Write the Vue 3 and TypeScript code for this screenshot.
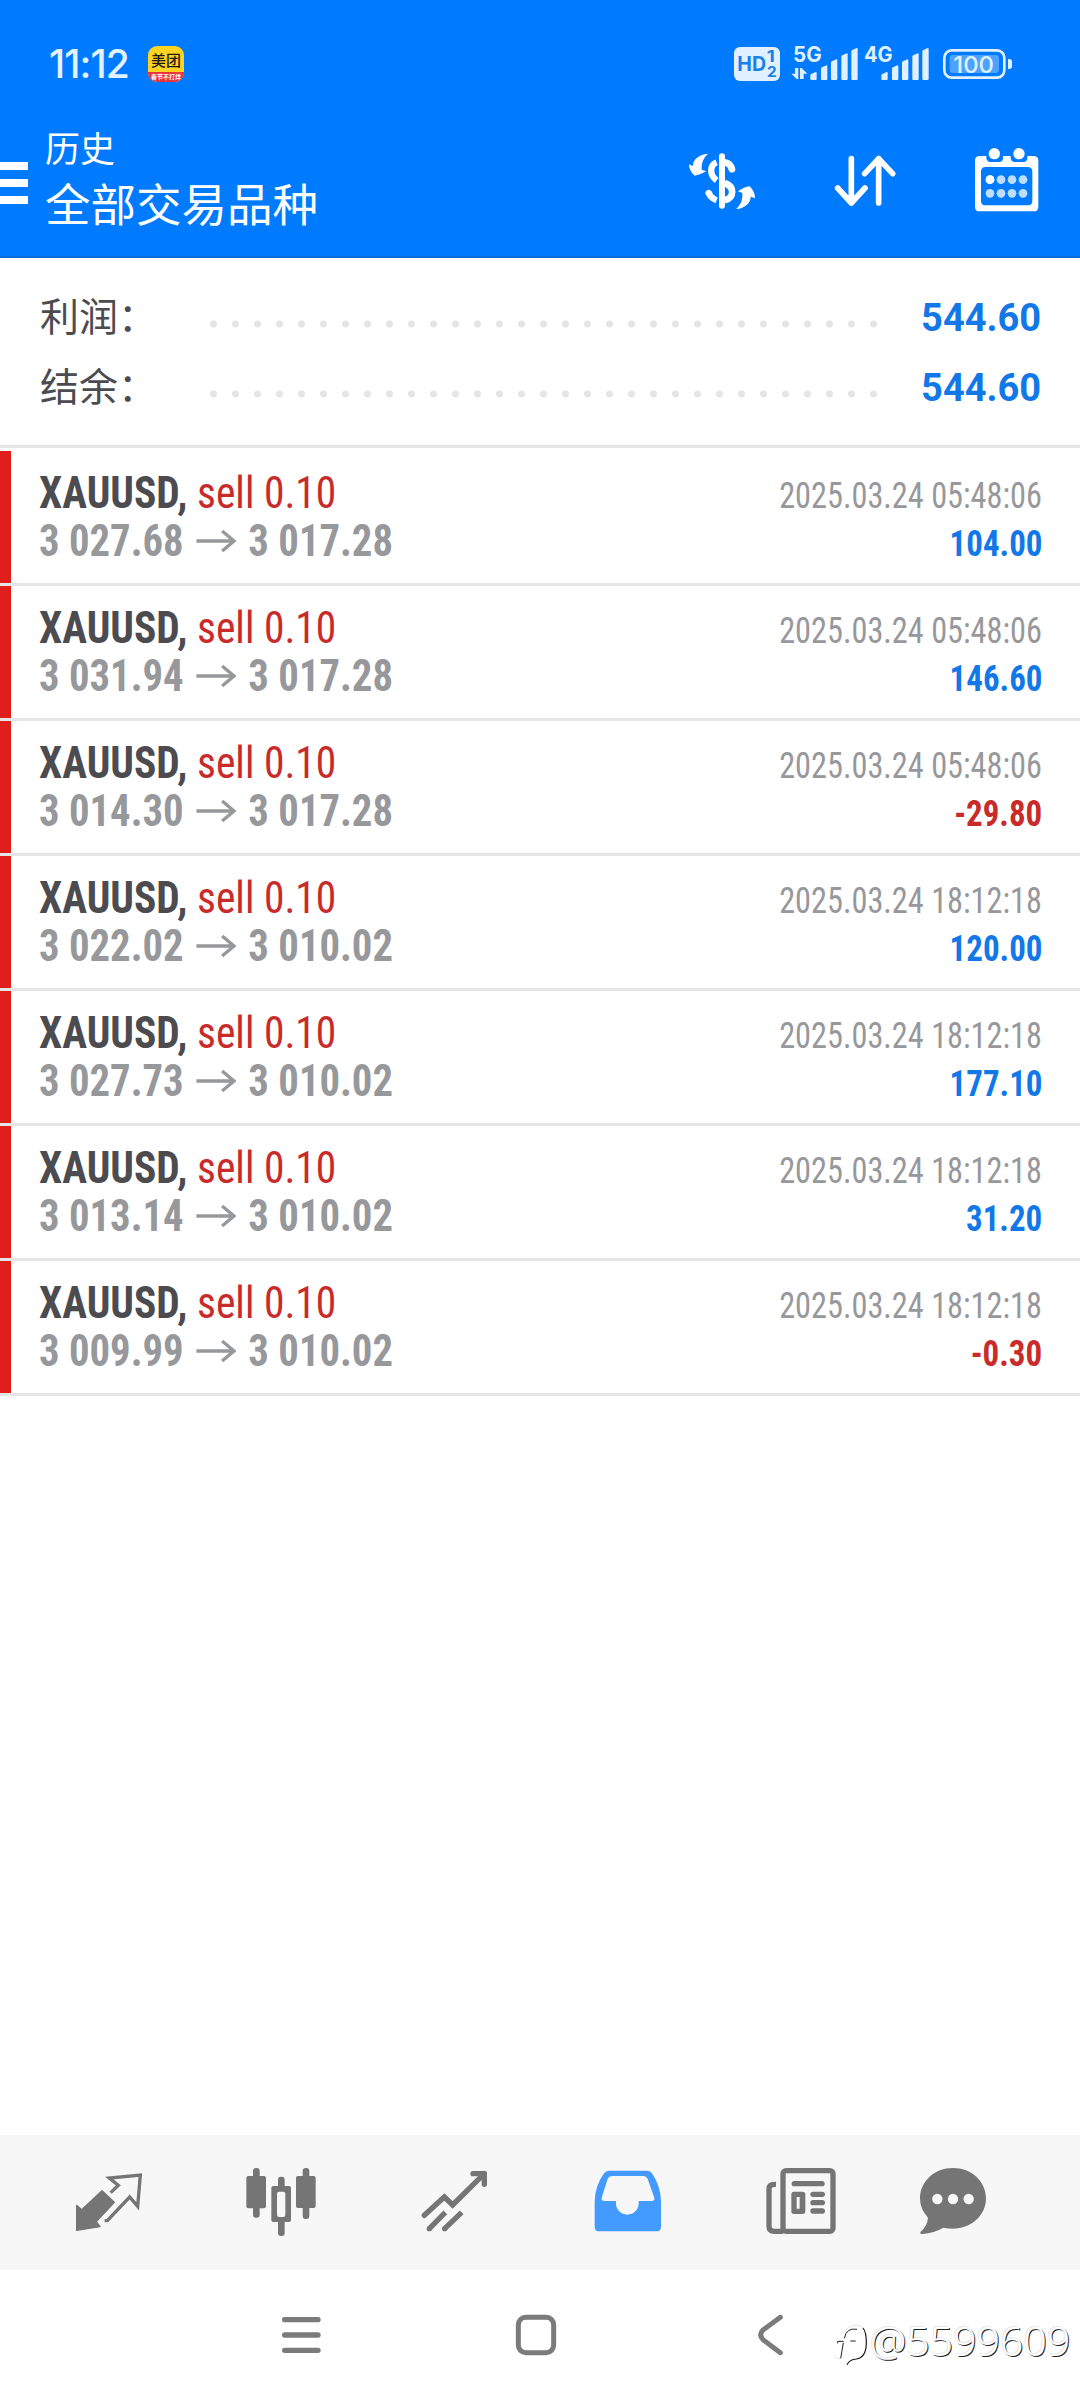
<script setup lang="ts">
interface Deal {
  open: string
  close: string
  time: string
  profit: string
}

const deals: Deal[] = [
  { open: '3 027.68', close: '3 017.28', time: '2025.03.24 05:48:06', profit: '104.00' },
  { open: '3 031.94', close: '3 017.28', time: '2025.03.24 05:48:06', profit: '146.60' },
  { open: '3 014.30', close: '3 017.28', time: '2025.03.24 05:48:06', profit: '-29.80' },
  { open: '3 022.02', close: '3 010.02', time: '2025.03.24 18:12:18', profit: '120.00' },
  { open: '3 027.73', close: '3 010.02', time: '2025.03.24 18:12:18', profit: '177.10' },
  { open: '3 013.14', close: '3 010.02', time: '2025.03.24 18:12:18', profit: '31.20' },
  { open: '3 009.99', close: '3 010.02', time: '2025.03.24 18:12:18', profit: '-0.30' },
]

const summary = [
  { label: '利润：', value: '544.60' },
  { label: '结余：', value: '544.60' },
]

// Signal bars: x offset and top edge of each
const bars = [
  [391, 160],
  [423, 140],
  [453, 122],
  [484, 104],
  [514, 88],
]
</script>

<template>
  <div class="screen">
    <header class="top">
      <div class="status">
        <span class="clock">11:12</span>
        <span class="app-badge">
          <span class="app-name">美团</span>
          <span class="app-promo">春节不打烊</span>
        </span>
        <svg class="status-icons" width="280" height="58" viewBox="159 42 840 174">
          <rect x="162" y="81" width="138" height="102" rx="18" fill="#e0f0ff" />
          <g class="sys" fill="#1a7fe8">
            <text x="172" y="153" font-size="60" font-weight="700" textLength="86" lengthAdjust="spacingAndGlyphs">HD</text>
            <text x="260" y="127" font-size="46" font-weight="700" textLength="24" lengthAdjust="spacingAndGlyphs">1</text>
            <text x="261" y="170" font-size="44" font-weight="700" textLength="29" lengthAdjust="spacingAndGlyphs">2</text>
          </g>
          <g class="sys" fill="#e0f0ff">
            <text x="339" y="126" font-size="63" font-weight="700" textLength="86" lengthAdjust="spacingAndGlyphs">5G</text>
            <text x="552" y="126" font-size="63" font-weight="700" textLength="86" lengthAdjust="spacingAndGlyphs">4G</text>
            <path d="M345 144h10v33h-5l-16-16h11zM360 177v-33h5l17 17h-11v16z" />
            <g v-for="dx in [0, 213]" :key="dx">
              <path
                v-for="b in bars"
                :key="b[0]"
                :d="`M${b[0] + dx} 180V${b[1] + 6}q0-3 3-4l13-6q3-1 3 3V177q0 3-3 3h-13q-3 0-3-3z`"
              />
            </g>
          </g>
          <rect x="793" y="91" width="180" height="82" rx="22" fill="none" stroke="#e0f0ff" stroke-width="8" />
          <rect x="809" y="105" width="148" height="54" rx="9" fill="#4da2ff" />
          <path d="M984 117h4q8 0 8 8v14q0 8-8 8h-4z" fill="#e0f0ff" />
          <text class="sys" x="820" y="158" font-size="69" font-weight="500" fill="#e0f0ff" textLength="122" lengthAdjust="spacingAndGlyphs">100</text>
        </svg>
      </div>

      <div class="toolbar">
        <span class="menu"><i></i><i></i><i></i></span>
        <div class="titles">
          <div class="sub">历史</div>
          <div class="title">全部交易品种</div>
        </div>
        <div class="actions">
          <svg width="70" height="64" viewBox="21 387 210 192">
            <g fill="none" stroke="#fff" stroke-linecap="butt">
              <path d="M126 409V557" stroke-width="18" stroke-linecap="round" />
              <path d="M110 427C88 436 88 466 110 481" stroke-width="19" />
              <path d="M86 518C89 528 97 536 110 541" stroke-width="19" />
              <path d="M86 519L87 520" stroke-width="19" stroke-linecap="round" />
              <path d="M134 427Q150 429 156 446M134 489C164 500 164 532 134 541" stroke-width="20" />
              <path d="M155 446L156 448" stroke-width="20" stroke-linecap="round" />
            </g>
            <g fill="#fff">
              <path d="M84 401Q62 402 46 418 39 426 38 438L27 433Q27 453 44 467 60 465 79 454L65 449Q62 421 84 401z" />
              <path d="M169 567Q189 566 204 551 211 542 213 530L225 535Q225 515 209 499 193 501 174 514L187 519Q190 547 169 567z" />
            </g>
          </svg>
          <svg width="62" height="52" viewBox="462 405 186 156">
            <path
              d="M514 416V549M473 504L514 549L555 504M596 549V416M554 461L596 416L638 461"
              fill="none" stroke="#fff" stroke-width="17" stroke-linecap="round" stroke-linejoin="round"
            />
          </svg>
          <svg width="66" height="66" viewBox="882 381 198 198">
            <path
              fill="#fff" fill-rule="evenodd"
              d="M899 408h20v6q2 12 12 12h26q12 0 12-12v-6h23v6q2 12 12 12h26q12 0 12-12v-6h19q14 0 14 14V560q0 14-14 14H899q-14 0-14-14V422q0-14 14-14zM917 441q-14 0-14 14v87q0 14 14 14h126q14 0 14-14v-87q0-14-14-14z"
            />
            <circle cx="943" cy="401" r="17" fill="#fff" />
            <circle cx="1017" cy="401" r="17" fill="#fff" />
            <g fill="#bfdeff">
              <template v-for="cy in [479, 520]" :key="cy">
                <circle v-for="cx in [930, 963, 996, 1029]" :key="cx" :cx="cx" :cy="cy" r="13" />
              </template>
            </g>
            <circle cx="930" cy="479" r="13" fill="#fff" />
          </svg>
        </div>
      </div>
    </header>

    <section class="summary">
      <div v-for="s in summary" :key="s.label" class="sum-row">
        <span class="sum-label">{{ s.label }}</span>
        <span class="dots"></span>
        <span class="sum-value">{{ s.value }}</span>
      </div>
    </section>

    <ul class="deals">
      <li v-for="(d, i) in deals" :key="i" class="deal">
        <div class="line">
          <span class="symbol">XAUUSD, <em>sell 0.10</em></span>
          <span class="time">{{ d.time }}</span>
        </div>
        <div class="line">
          <span class="prices">
            <span>{{ d.open }}</span>
            <svg width="43" height="24" viewBox="0 0 40 24" preserveAspectRatio="none">
              <path d="M0 12H38M26 2L38 12L26 22" fill="none" stroke="#97989c" stroke-width="3.4" />
            </svg>
            <span>{{ d.close }}</span>
          </span>
          <span class="profit" :class="{ loss: d.profit.startsWith('-') }">{{ d.profit }}</span>
        </div>
      </li>
    </ul>

    <nav class="tabs">
      <!-- quotes -->
      <svg width="70" height="62" viewBox="222 153 210 186">
        <path
          d="M306 212L343 247L289 305L300 320L230 331V256L245 269Z"
          fill="#757575" stroke="#757575" stroke-width="4" stroke-linejoin="round"
        />
        <path
          d="M332 218L355 196L328 174L421 165L413 259L389 231L322 302H314"
          fill="none" stroke="#757575" stroke-width="10"
        />
      </svg>
      <!-- charts -->
      <svg width="70" height="70" viewBox="738 141 210 210">
        <g fill="#757575">
          <rect x="759" y="144" width="20" height="149" rx="9" />
          <rect x="739" y="168" width="59" height="97" rx="6" />
          <rect x="908" y="144" width="20" height="153" rx="9" />
          <rect x="888" y="168" width="59" height="96" rx="6" />
          <rect x="834" y="170" width="20" height="178" rx="9" />
          <rect x="814" y="198" width="59" height="108" rx="6" />
        </g>
        <rect x="831" y="215" width="25" height="76" rx="6" fill="#f7f7f7" />
      </svg>
      <!-- trade -->
      <svg width="68" height="64" viewBox="182 147 204 192">
        <g fill="none" stroke="#757575" stroke-width="16">
          <path d="M192 286L252 231L277 255L372 161" stroke-linecap="round" />
          <path d="M338 161H372V193" stroke-linecap="round" stroke-linejoin="round" />
          <path d="M255 277L207 326M304 277L253 326" />
        </g>
        <circle cx="207" cy="326" r="8" fill="#757575" />
        <circle cx="253" cy="326" r="8" fill="#757575" />
      </svg>
      <!-- history -->
      <svg width="68" height="62" viewBox="701 150 204 186">
        <path
          fill="#439bff" fill-rule="evenodd"
          d="M746 152H860Q870 152 875 160Q902 200 902 246V320Q902 334 888 334H717Q703 334 703 320V246Q703 200 731 160Q736 152 746 152zM756 168Q746 168 742 177L725 230Q721 243 733 243H767V250A34 34 0 0 0 835 250V243H873Q886 243 881 230L862 177Q858 168 848 168z"
        />
      </svg>
      <!-- news -->
      <svg width="70" height="68" viewBox="138 141 210 204">
        <g fill="none" stroke="#757575" stroke-width="16">
          <rect x="189" y="152" width="150" height="182" rx="9" />
          <path d="M168 193Q147 192 147 207V318Q147 334 163 334H190" />
        </g>
        <g fill="#757575">
          <rect x="215" y="183" width="99" height="16" rx="8" />
          <path fill-rule="evenodd" d="M222 215h26q8 0 8 8v51q0 8-8 8h-26q-8 0-8-8v-51q0-8 8-8zM230 231v35h9v-35z" />
          <rect x="271" y="215" width="44" height="16" rx="8" />
          <rect x="271" y="240" width="44" height="16" rx="8" />
          <rect x="271" y="265" width="44" height="16" rx="8" />
        </g>
      </svg>
      <!-- messages -->
      <svg width="68" height="68" viewBox="597 141 204 204">
        <path
          fill="#757575"
          d="M699 144C754 144 798 184 798 235S754 326 699 326Q684 326 670 323Q643 339 607 342Q598 342 602 335Q622 318 624 293Q600 268 600 235C600 184 644 144 699 144z"
        />
        <g fill="#f7f7f7">
          <circle cx="652" cy="237" r="15.500" /><circle cx="699" cy="237" r="15.500" /><circle cx="746" cy="237" r="15.500" />
        </g>
      </svg>
    </nav>

    <footer class="sysnav">
      <svg width="40" height="38" viewBox="843 588 120 114">
        <path d="M854 599H954M854 645H954M854 691H954" stroke="#7b7b7b" stroke-width="16" stroke-linecap="round" />
      </svg>
      <svg width="42" height="42" viewBox="465 581 126 126">
        <rect x="475" y="591" width="106" height="106" rx="22" fill="none" stroke="#7b7b7b" stroke-width="15" />
      </svg>
      <svg width="28" height="42" viewBox="108 582 84 126">
        <path
          d="M181 592L129 630Q115 644 129 659L181 698"
          fill="none" stroke="#7b7b7b" stroke-width="15" stroke-linecap="round" stroke-linejoin="round"
        />
      </svg>
      <div class="mark">
        <svg width="36" height="42" viewBox="340 612 108 126">
          <path d="M430 624Q440 636 440 668Q440 712 410 717Q390 718 382 734" fill="none" stroke="#111" stroke-width="3.500" />
          <path d="M412 628Q380 622 374 655M371 668L363 716M354 670V664H372M392 663H408" fill="none" stroke="#222" stroke-width="3" />
          <path d="M372 640Q384 616 412 615Q424 616 430 624M363 716Q352 718 343 708" fill="none" stroke="#ddd" stroke-width="2.500" />
        </svg>
        <span>@5599609</span>
      </div>
    </footer>
  </div>
</template>

<style>
body {
  margin: 0;
  background: #fff;
}
</style>

<style scoped>
.screen {
  width: 1080px;
  height: 2400px;
  display: flex;
  flex-direction: column;
  background: #fff;
  overflow: hidden;
  font-family: Roboto, "Noto Sans CJK SC", sans-serif;
}

.top {
  height: 258px;
  box-sizing: border-box;
  background: #007aff;
  border-bottom: 2px solid #0a6cd6;
  color: #fff;
}

.status {
  height: 128px;
  display: flex;
  align-items: flex-start;
  padding: 44px 67px 0 49px;
  box-sizing: border-box;
}

.clock {
  font: 500 39px/40px Inter, sans-serif;
  color: #e0f3ff;
  width: 99px;
  letter-spacing: -0.9px;
}

.app-badge {
  width: 36px;
  height: 36px;
  margin-top: 2px;
  border-radius: 9px;
  overflow: hidden;
  background: #ffd322;
  display: flex;
  flex-direction: column;
  font-family: "Noto Sans CJK SC", sans-serif;
  white-space: nowrap;
}

.app-name {
  height: 26px;
  font-size: 15px;
  line-height: 27px;
  font-weight: 500;
  color: #1d1a10;
  text-align: center;
}

.app-promo {
  height: 10px;
  line-height: 10px;
  font-size: 6px;
  font-weight: 700;
  text-align: center;
  background: #e8323c;
}

.status-icons {
  margin: -10px 0 0 auto;
}

.sys {
  font-family: Inter, sans-serif;
}

.toolbar {
  display: flex;
  align-items: flex-start;
}

.menu {
  width: 28px;
  margin: 34px 17px 0 0;
  display: flex;
  flex-direction: column;
  gap: 9px;
}

.menu i {
  height: 8px;
  background: #fff;
}

.titles {
  font-family: "Noto Sans CJK SC", sans-serif;
}

.sub {
  font-size: 35px;
  line-height: 44px;
  margin-top: -3px;
}

.title {
  font-size: 45.5px;
  line-height: 60px;
  margin-top: 3px;
}

.actions {
  margin-left: auto;
  padding-right: 40px;
  display: flex;
  align-items: flex-start;
}

.actions svg:nth-child(1) {
  margin: 21px 77px 0 0;
}

.actions svg:nth-child(2) {
  margin: 27px 78px 0 0;
}

.actions svg:nth-child(3) {
  margin-top: 19px;
}

.summary {
  height: 190px;
  box-sizing: border-box;
  border-bottom: 3px solid #e5e5e5;
  padding: 25px 39px 0 40px;
}

.sum-row {
  height: 70px;
  display: flex;
  align-items: center;
}

.sum-label {
  width: 170px;
  margin-top: -8px;
  font-size: 39px;
  line-height: 70px;
  color: #4c4b50;
  font-family: "Noto Sans CJK SC", sans-serif;
}

.dots {
  width: 682px;
  height: 8px;
  margin-top: 12px;
  margin-right: auto;
  background: radial-gradient(circle at 3.5px 4px, #e5e5e5 3.2px, transparent 3.9px) 0 0 / 22px 8px;
}

.sum-value {
  font-size: 39px;
  font-weight: 700;
  color: #1278e8;
  transform: scaleX(0.975);
  transform-origin: right;
}

.deals {
  list-style: none;
  margin: 3px 0 0;
  padding: 0;
}

.deal {
  height: 135px;
  box-sizing: border-box;
  border-bottom: 3px solid #e5e5e5;
  padding: 18px 38px 0 39px;
  background: linear-gradient(#e01e1e, #e01e1e) 0 0 / 11px 100% no-repeat;
  background-clip: padding-box;
}

.line {
  display: flex;
  justify-content: space-between;
  align-items: baseline;
  height: 48px;
  line-height: 48px;
  white-space: nowrap;
  font-stretch: 75%;
}

/* Figures are set narrower than the condensed cut of the face */
.symbol,
.prices {
  transform-origin: left;
}

.time,
.profit {
  transform-origin: right;
}

.symbol {
  font-size: 44px;
  font-weight: 700;
  color: #4c4b50;
  transform: scaleX(0.9425);
}

.symbol em {
  font-style: normal;
  font-weight: 400;
  color: #c92a2a;
}

.time {
  font-size: 36px;
  color: #97989c;
  transform: scaleX(0.897);
}

.prices {
  font-size: 44px;
  font-weight: 700;
  color: #97989c;
  display: flex;
  align-items: center;
  gap: 13.5px;
  transform: scaleX(0.925);
}

.profit {
  font-size: 36px;
  font-weight: 700;
  color: #1278e8;
  transform: scaleX(0.915);
}

.profit.loss {
  color: #c92a2a;
}

.tabs {
  margin-top: auto;
  height: 135px;
  background: #f7f7f7;
  display: flex;
  align-items: flex-start;
}

.tabs svg:nth-child(1) { margin: 36px 0 0 74px; }
.tabs svg:nth-child(2) { margin: 32px 0 0 102px; }
.tabs svg:nth-child(3) { margin: 34px 0 0 105px; }
.tabs svg:nth-child(4) { margin: 35px 0 0 105px; }
.tabs svg:nth-child(5) { margin: 32px 0 0 104px; }
.tabs svg:nth-child(6) { margin: 32px 0 0 83px; }

.sysnav {
  height: 130px;
  display: flex;
  align-items: flex-start;
}

.sysnav > svg:nth-child(1) { margin: 46px 0 0 281px; }
.sysnav > svg:nth-child(2) { margin: 44px 0 0 194px; }
.sysnav > svg:nth-child(3) { margin: 44px 0 0 199px; }

.mark {
  margin: 54px 0 0 49px;
  display: flex;
  font: 300 41px/42px "Noto Sans", sans-serif;
  color: #fff;
  text-shadow: 1px 1px 0 #222, -1px -1px 0 #e8e8e8;
}

.mark span {
  margin: -5px 0 0 1px;
}
</style>
